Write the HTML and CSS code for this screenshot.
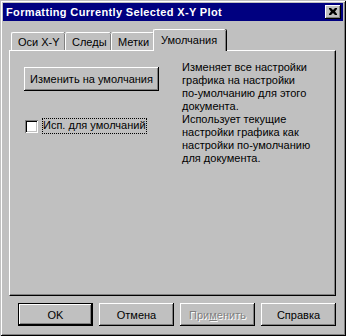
FILE: index.html
```html
<!DOCTYPE html>
<html lang="ru">
<head>
    <meta charset="UTF-8">
    <meta name="viewport" content="width=device-width, initial-scale=1.0">
    <title>Formatting Currently Selected X-Y Plot</title>
    <link rel="stylesheet" href="styles.css">
</head>
<body>
    <div class="window">
        <!-- Title bar -->
        <div class="titlebar">
            <span class="title">Formatting Currently Selected X-Y Plot</span>
            <button class="close" type="button">
                <svg width="8" height="7" viewBox="0 0 8 7">
                    <path d="M0 0h2l2 2 2-2h2v1L6 3.5 8 6v1H6L4 5 2 7H0V6l2-2.5L0 1z" fill="#000"/>
                </svg>
            </button>
        </div>

        <!-- Tabs -->
        <div class="tabs">
            <div class="tab">Оси X-Y</div>
            <div class="tab">Следы</div>
            <div class="tab">Метки</div>
            <div class="tab active">Умолчания</div>
        </div>

        <!-- Panel -->
        <div class="panel">
            <div class="left">
                <button class="btn wide" type="button">Изменить на умолчания</button>
                <label class="check">
                    <span class="box"></span>
                    <span class="focus">Исп. для умолчаний</span>
                </label>
            </div>
            <div class="right">
                <p>Изменяет все настройки<br>графика на настройки<br>по-умолчанию для этого<br>документа.</p>
                <p>Использует текущие<br>настройки графика как<br>настройки по-умолчанию<br>для документа.</p>
            </div>
        </div>

        <!-- Dialog buttons -->
        <div class="actions">
            <button class="btn default" type="button">OK</button>
            <button class="btn" type="button">Отмена</button>
            <button class="btn disabled" type="button">При<u>м</u>енить</button>
            <button class="btn" type="button">Справка</button>
        </div>
    </div>
</body>
</html>
```

FILE: styles.css
```css
body {
    margin: 0;
    padding: 0;
    background-color: #c0c0c0;
    font-family: "Liberation Sans", Arial, sans-serif;
    font-size: 11px;
    color: #000;
}

.window {
    width: 346px;
    height: 336px;
    box-sizing: border-box;
    padding: 3px;
    background-color: #c0c0c0;
    box-shadow: inset 1px 1px #c0c0c0, inset -1px -1px #000,
                inset 2px 2px #fff, inset -2px -2px #808080;
}

.titlebar {
    height: 18px;
    background-color: #000080;
    display: flex;
    align-items: center;
    justify-content: space-between;
    padding: 0 2px 0 3px;
}

.title {
    color: #fff;
    font-weight: bold;
    font-size: 11px;
    letter-spacing: 0.35px;
}

.close {
    width: 16px;
    height: 14px;
    padding: 0;
    border: none;
    background-color: #c0c0c0;
    box-shadow: inset -1px -1px #000, inset 1px 1px #fff, inset -2px -2px #808080;
    display: flex;
    align-items: center;
    justify-content: center;
}

.close svg {
    display: block;
    margin: 0 0 1px 0;
}

.tabs {
    display: flex;
    align-items: flex-end;
    height: 21px;
    margin-top: 8px;
    padding-left: 8px;
    position: relative;
    z-index: 1;
}

.tab {
    height: 18px;
    box-sizing: border-box;
    padding: 3px 6px 0 6px;
    border-top: 1px solid #fff;
    border-left: 1px solid #fff;
    border-radius: 2px 2px 0 0;
    box-shadow: inset -1px 0 #808080, 1px 0 #000;
    white-space: nowrap;
}

.tab:nth-child(1) { width: 54px; }
.tab:nth-child(2) { width: 46px; }
.tab:nth-child(3) { width: 43px; }

.tab.active {
    height: 22px;
    width: 73px;
    margin-left: -1px;
    margin-bottom: -1px;
    padding: 4px 6px 0 7px;
    background-color: #c0c0c0;
}

.panel {
    height: 246px;
    box-sizing: border-box;
    margin: 0 7px 0 6px;
    border-top: 1px solid #fff;
    border-left: 1px solid #fff;
    border-right: 1px solid #000;
    border-bottom: 1px solid #000;
    box-shadow: inset -1px -1px #808080;
    display: flex;
    padding: 16px 0 0 14px;
}

.left {
    width: 157px;
    display: flex;
    flex-direction: column;
}

.btn {
    height: 23px;
    width: 75px;
    padding: 0;
    border: none;
    background-color: #c0c0c0;
    font-family: "Liberation Sans", Arial, sans-serif;
    font-size: 11px;
    color: #000;
    box-shadow: inset -1px -1px #000, inset 1px 1px #fff, inset -2px -2px #808080;
}

.btn.wide {
    width: 135px;
    height: 24px;
}

.btn.default {
    box-shadow: inset 0 0 0 1px #000, inset -2px -2px #000,
                inset 2px 2px #fff, inset -3px -3px #808080;
}

.btn.disabled {
    color: #808080;
    text-shadow: 1px 1px #fff;
}

.check {
    display: flex;
    align-items: center;
    margin-top: 27px;
    margin-left: 1px;
}

.box {
    width: 13px;
    height: 13px;
    box-sizing: border-box;
    background-color: #fff;
    box-shadow: inset 1px 1px #808080, inset -1px -1px #fff,
                inset 2px 2px #000, inset -2px -2px #c0c0c0;
}

.focus {
    margin-left: 4px;
    padding: 1px 1px 2px 1px;
    outline: 1px dotted #000;
    outline-offset: -1px;
    line-height: 13px;
}

.right {
    padding-left: 1px;
}

.right p {
    margin: 0;
    line-height: 13px;
}

.right p:first-child {
    margin-top: -6px;
}

.actions {
    display: flex;
    justify-content: flex-end;
    gap: 6px;
    margin: 7px 7px 0 0;
}
```
